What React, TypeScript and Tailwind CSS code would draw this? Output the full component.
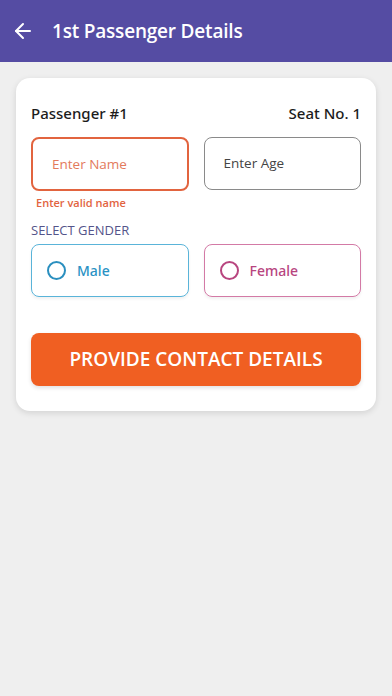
import { ArrowLeft } from "lucide-react";

const App = () => {
  return (
    <div className="min-h-[696px] w-full bg-[#efefef] font-['Open_Sans',sans-serif]">
      <header className="h-[62px] bg-[#554ca3] flex items-center pl-[11px]">
        <ArrowLeft size={24} strokeWidth={2} className="text-white" />
        <h1 className="ml-[17px] text-white text-[19px] font-semibold tracking-[-0.2px]">1st Passenger Details</h1>
      </header>

      <main className="px-4 pt-4">
        <section className="bg-white rounded-[14px] shadow-[0_2px_6px_rgba(0,0,0,0.12)] px-[15px] pt-[24px] pb-[25px]">
          <div className="flex justify-between items-center font-['Noto_Sans',sans-serif] text-[15px] font-medium text-[#1c1c1c] leading-[22px]">
            <span>Passenger #1</span>
            <span>Seat No. 1</span>
          </div>

          <div className="mt-[13px] grid grid-cols-2 gap-[15px]">
            <div>
              <div className="h-[54px] rounded-[8px] border-2 border-[#e2643f] flex items-center px-[19px] text-[13.5px] text-[#e37a5c]">
                Enter Name
              </div>
              <p className="mt-[4px] ml-[5px] text-[11px] font-semibold text-[#e2643f] leading-[16px]">Enter valid name</p>
            </div>
            <div className="h-[53px] rounded-[8px] border border-[#8a8a8a] flex items-center px-[19px] text-[13.5px] text-[#444]">
              Enter Age
            </div>
          </div>

          <p className="mt-[10px] text-[13px] text-[#54548a] leading-[18px]">SELECT GENDER</p>

          <div className="mt-[5px] grid grid-cols-2 gap-[15px]">
            <button className="h-[53px] rounded-[8px] border border-[#5ab4d9] flex items-center pl-[15px] gap-[11px] font-['Noto_Sans',sans-serif] text-[14px] font-medium text-[#2a92c4] shadow-[0_2px_3px_rgba(0,0,0,0.06)]">
              <span className="w-[19px] h-[19px] rounded-full border-2 border-[#2a8fbf]" />
              Male
            </button>
            <button className="h-[53px] rounded-[8px] border border-[#d37aa6] flex items-center pl-[15px] gap-[11px] font-['Noto_Sans',sans-serif] text-[14px] font-medium text-[#b8457f] shadow-[0_2px_3px_rgba(0,0,0,0.06)]">
              <span className="w-[19px] h-[19px] rounded-full border-2 border-[#b8457f]" />
              Female
            </button>
          </div>

          <button className="mt-[36px] w-full h-[53px] rounded-[8px] bg-[#f05f22] text-white text-[19px] font-semibold shadow-[0_2px_4px_rgba(0,0,0,0.12)]">
            PROVIDE CONTACT DETAILS
          </button>
        </section>
      </main>
    </div>
  );
};

export default App;
